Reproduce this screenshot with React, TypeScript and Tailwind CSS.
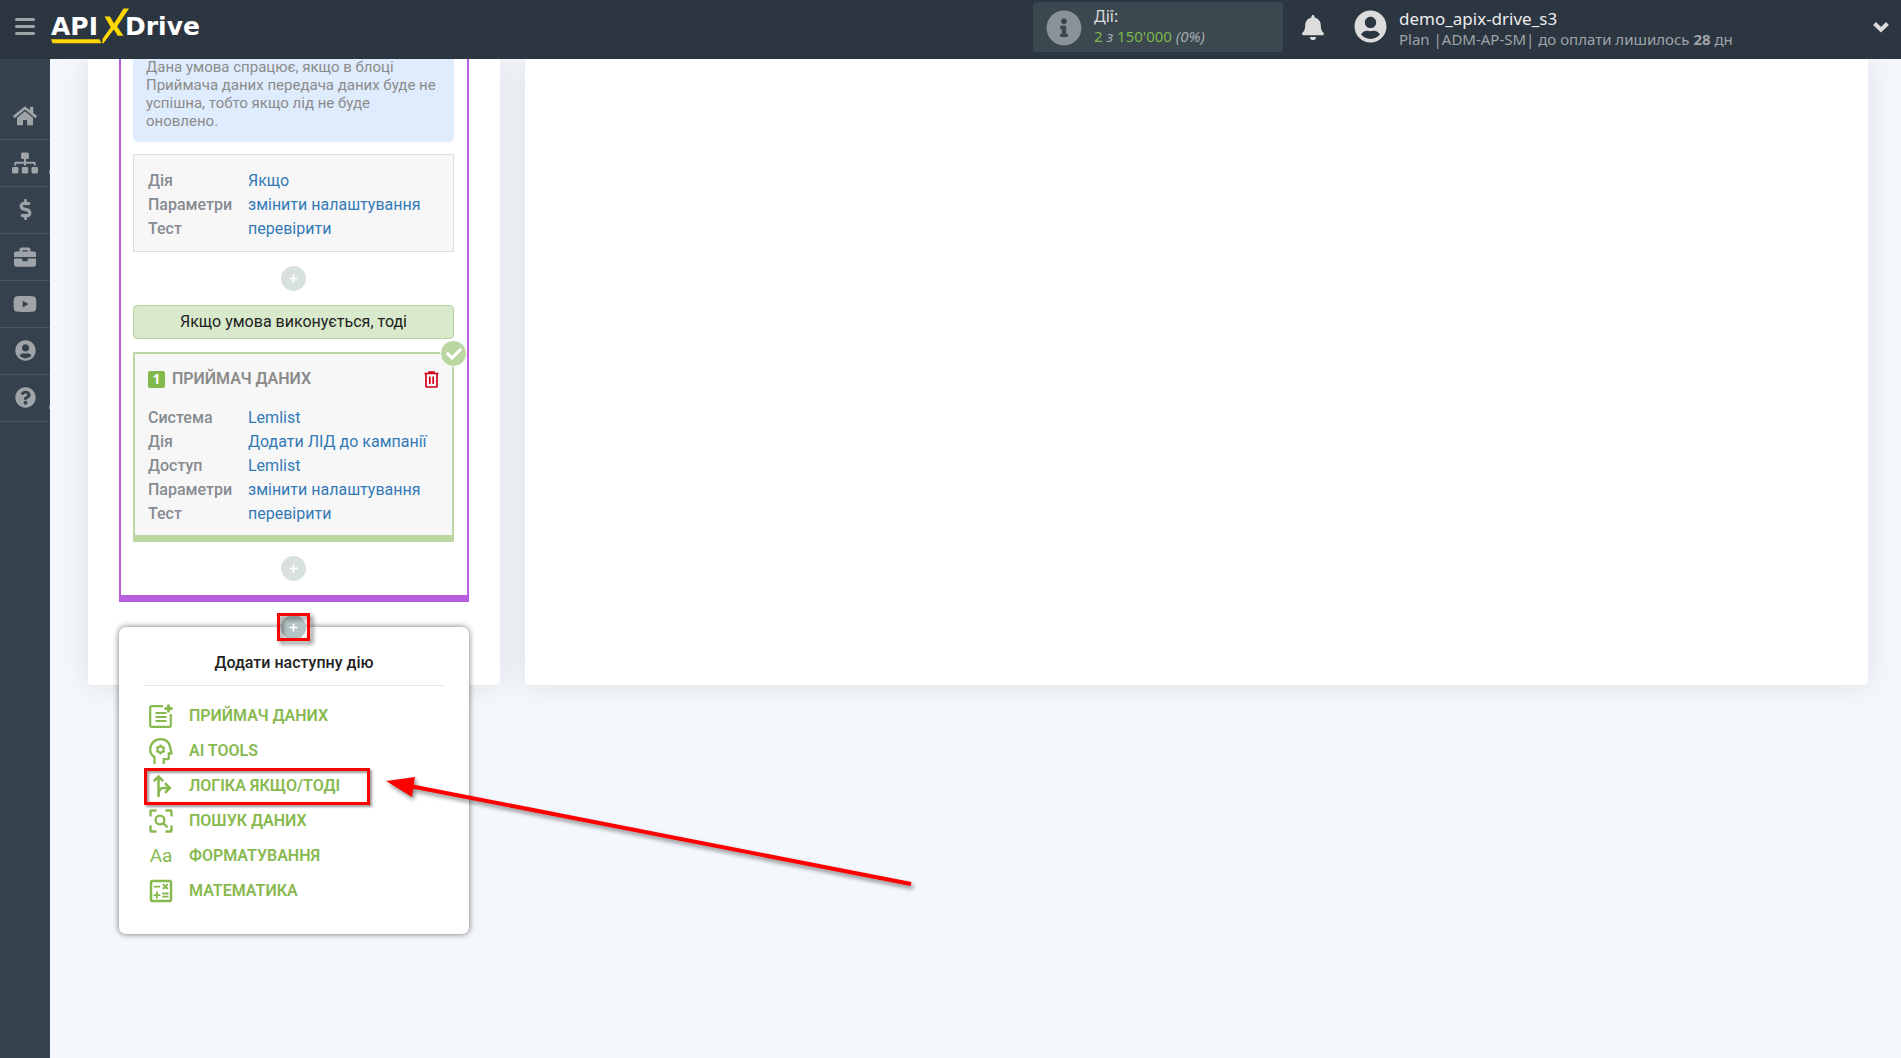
import type { ReactNode } from "react";
import {
  FaBell,
  FaBriefcase,
  FaCheck,
  FaDollarSign,
  FaHome,
  FaInfoCircle,
  FaQuestionCircle,
  FaSitemap,
  FaUserCircle,
  FaYoutube,
} from "react-icons/fa";
import { MdOutlineCalculate } from "react-icons/md";

function Logo() {
  return (
    <svg width="154" height="46" viewBox="0 0 154 46" role="img" aria-label="APIXDrive">
      <g fill="#ffffff" fontFamily="'DejaVu Sans', sans-serif" fontWeight="700" fontSize="25">
        <text x="1" y="35">
          API
        </text>
        <text x="75" y="35">
          Drive
        </text>
      </g>
      <g fill="#ffd800">
        <path d="M1 39.300h48.500l2 4H2.500z" />
        <path d="M54.500 16.500h5.500l4 7L73.500 8.500H79L67 26.500l6.500 9.200H67.800l-4-6.200L53.500 43.300h-1.200l.2-4.500 8.300-11.500z" />
      </g>
    </svg>
  );
}

function TopBar() {
  return (
    <header className="relative z-20 flex h-[59px] shrink-0 items-center bg-[#2b3641] font-['Noto_Sans',sans-serif]">
      <button type="button" aria-label="Меню" className="mb-[6px] ml-[15px] flex w-5 flex-col gap-1">
        <span className="h-[3px] rounded-xs bg-[#9fa4a8]" />
        <span className="h-[3px] rounded-xs bg-[#9fa4a8]" />
        <span className="h-[3px] rounded-xs bg-[#9fa4a8]" />
      </button>
      <a href="#" className="ml-[15px] self-start">
        <Logo />
      </a>
      <div className="mt-[2px] ml-auto flex h-[50px] w-[250px] items-start gap-3 self-start rounded bg-[#3b4850] pl-[13px]">
        <FaInfoCircle className="mt-2 size-9 text-[#8b9297]" />
        <div className="mt-1 leading-5">
          <div className="text-base leading-5 text-[#dcdcdc]">Дії:</div>
          <div className="text-[15px] leading-5 text-[#7cb84c]">
            2 <i className="text-[#a5abae]">з</i> 150'000 <i className="text-[#a5abae]">(0%)</i>
          </div>
        </div>
      </div>
      <button type="button" aria-label="Сповіщення" className="mb-1 ml-[18px] text-[#dcdcdc]">
        <FaBell className="h-[25px] w-6" />
      </button>
      <button type="button" className="mb-[6px] ml-[29px] flex w-[547px] items-center pr-3 text-left">
        <FaUserCircle className="size-[33px] text-[#dcdcdc]" />
        <span className="mt-1 ml-3 flex flex-col">
          <span className="text-[17px] leading-5 text-[#ececec]">demo_apix-drive_s3</span>
          <span className="text-[15px] leading-5 text-[#9fa4a8]">
            Plan |ADM-AP-SM| до оплати лишилось <b>28</b> дн
          </span>
        </span>
        <svg
          className="ml-auto"
          width="16"
          height="12"
          viewBox="0 0 16 12"
          fill="none"
          stroke="#dcdcdc"
          strokeWidth="4"
          aria-hidden="true"
        >
          <path d="M1.500 2.500L8 8.700l6.500-6.200" />
        </svg>
      </button>
    </header>
  );
}

const navItems = [
  { label: "Головна", icon: FaHome, size: "size-6", sub: false },
  { label: "Зв'язки", icon: FaSitemap, size: "size-[26px]", sub: true },
  { label: "Оплата", icon: FaDollarSign, size: "size-[21px]", sub: false },
  { label: "Послуги", icon: FaBriefcase, size: "size-[22px]", sub: false },
  { label: "Відео", icon: FaYoutube, size: "size-6", sub: false },
  { label: "Профіль", icon: FaUserCircle, size: "size-[21px]", sub: false },
  { label: "Допомога", icon: FaQuestionCircle, size: "size-[21px]", sub: true },
];

function Sidebar() {
  return (
    <nav className="w-[50px] shrink-0 bg-[#36414e] pt-[34px]">
      {navItems.map(({ label, icon: Icon, size, sub }) => (
        <a
          key={label}
          href="#"
          aria-label={label}
          className="relative flex h-[47px] items-center justify-center border-b border-[#4a5562] pb-px text-[#9fa4a8]"
        >
          <Icon className={size} />
          {sub && <span className="absolute right-0 bottom-3 h-1 w-px bg-[#7d858d]" />}
        </a>
      ))}
    </nav>
  );
}

function Rows({ rows }: { rows: [string, string][] }) {
  return (
    <dl className="grid grid-cols-[100px_1fr] text-base leading-6">
      {rows.map(([name, value]) => (
        <div key={name} className="contents">
          <dt className="font-medium text-[#868b92]">{name}</dt>
          <dd className="whitespace-nowrap">
            <a href="#" className="text-[#337ab7]">
              {value}
            </a>
          </dd>
        </div>
      ))}
    </dl>
  );
}

function PlusButton({ active = false }: { active?: boolean }) {
  return (
    <button
      type="button"
      aria-label="Додати дію"
      className={
        active
          ? "relative z-10 flex size-[25px] items-center justify-center rounded-full bg-[#b4c3c3] text-white"
          : "mx-auto flex size-[25px] items-center justify-center rounded-full bg-[#d9e1e0] text-white"
      }
    >
      <svg width="9" height="9" viewBox="0 0 9 9" aria-hidden="true">
        <path d="M4.500 0.500v8M0.500 4.500h8" stroke="currentColor" strokeWidth="1.700" />
      </svg>
    </button>
  );
}

function ReceiverIcon() {
  return (
    <svg width="24" height="24" viewBox="0 0 24 24" fill="none" stroke="currentColor" strokeWidth="2.200">
      <path d="M14 2.200H2.200a1 1 0 0 0-1 1v18.600a1 1 0 0 0 1 1h18.600a1 1 0 0 0 1-1V10" />
      <path d="M6.500 9h11M6.500 13h11M6.500 17h11" />
      <path d="M19.500 0.500v8M15.500 4.500h8" strokeWidth="2.800" />
    </svg>
  );
}

function HeadGearIcon() {
  return (
    <svg
      className="shrink-0"
      width="24"
      height="26"
      viewBox="0 0 24 26"
      fill="none"
      stroke="currentColor"
      strokeWidth="2.300"
    >
      <path d="M5.500 26v-6.800C2.700 17.200 1.200 14.600 1.200 11.500 1.200 5.700 5.700 1.200 11.500 1.200c5.200 0 8.600 3.200 9.500 7.500l1.500 6.600h-2.700v4.500q0 1.400-1.400 1.400h-3.700V26" />
      <circle cx="11.500" cy="11.500" r="3" strokeWidth="2" />
      <path
        d="M11.500 6.500v2M11.500 14.500v2M7.200 9l1.700 1M14.100 13l1.700 1M7.200 14l1.700-1M14.100 10l1.700-1"
        strokeWidth="2"
      />
    </svg>
  );
}

function BranchIcon() {
  return (
    <svg width="24" height="24" viewBox="0 0 24 24" fill="none" stroke="currentColor" strokeWidth="2.500">
      <path d="M9.500 23V3M4.800 7.200l4.700-4.700 4.700 4.700M9.500 21c0-5 1.500-7 5-7h6.500M16 9.200l4.800 4.800-4.800 4.800" />
    </svg>
  );
}

function SearchFrameIcon() {
  return (
    <svg width="24" height="24" viewBox="0 0 24 24" fill="none" stroke="currentColor" strokeWidth="2.400">
      <path d="M1.500 7.500V2.200Q1.500 1.500 2.200 1.500H7.500M16.500 1.500h5.300q.7 0 .7.700v5.300M22.500 16.500v5.300q0 .7-.7.700h-5.300M7.500 22.500H2.200q-.7 0-.7-.7v-5.300" />
      <circle cx="11" cy="11" r="4.400" />
      <path d="M14 14l4.500 4.500" />
    </svg>
  );
}

function TrashIcon() {
  return (
    <svg width="15" height="17" viewBox="0 0 15 17" fill="none" stroke="currentColor" strokeWidth="1.700">
      <path d="M0.500 2.500h14M5 2.500V1h5v1.500M2 3v12.200q0 .8.8.8h9.400q.8 0 .8-.8V3M5.800 5.500V13M9.200 5.500V13" />
    </svg>
  );
}

const actions: { label: string; icon: ReactNode; marked?: boolean }[] = [
  { label: "ПРИЙМАЧ ДАНИХ", icon: <ReceiverIcon /> },
  { label: "AI TOOLS", icon: <HeadGearIcon /> },
  { label: "ЛОГІКА ЯКЩО/ТОДІ", icon: <BranchIcon />, marked: true },
  { label: "ПОШУК ДАНИХ", icon: <SearchFrameIcon /> },
  { label: "ФОРМАТУВАННЯ", icon: <span className="pt-[2px] text-[19px] font-normal">Aa</span> },
  { label: "МАТЕМАТИКА", icon: <MdOutlineCalculate className="size-[30px] shrink-0" /> },
];

function Arrow() {
  return (
    <svg
      className="pointer-events-none absolute top-2 left-[238px] drop-shadow-[2px_3px_2px_rgba(0,0,0,0.45)]"
      width="540"
      height="116"
      viewBox="0 0 540 116"
      aria-hidden="true"
    >
      <path d="M28 10L529 108" stroke="#ff0000" strokeWidth="4" />
      <path d="M4 5l29-4-3 20z" fill="#ff0000" />
    </svg>
  );
}

function ActionMenu() {
  return (
    <div className="absolute top-3 -right-px left-0 rounded-[7px] bg-white px-[25px] pt-[23px] pb-[26px] shadow-[0_0_6px_rgba(0,0,0,0.55)]">
      <h3 className="border-b border-[#e9e9e9] pb-[9px] text-center text-base leading-[26px] font-medium text-[#222]">
        Додати наступну дію
      </h3>
      <ul className="mt-3">
        {actions.map(({ label, icon, marked }) => (
          <li key={label} className="relative">
            <button
              type="button"
              className="flex h-[35px] w-full items-center text-left text-base font-semibold text-[#87b94f]"
            >
              <span className="ml-[5px] flex w-6 justify-center">{icon}</span>
              <span className="ml-4">{label}</span>
            </button>
            {marked && (
              <>
                <span className="pointer-events-none absolute top-0 left-0 h-[37px] w-[226px] border-3 border-[#ff0000] drop-shadow-[2px_2px_1px_rgba(0,0,0,0.4)]" />
                <Arrow />
              </>
            )}
          </li>
        ))}
      </ul>
    </div>
  );
}

function FlowPanel() {
  return (
    <section className="w-[412px] shrink-0 rounded-b bg-white px-[31px] pb-[45px] shadow-[0_0_30px_rgba(0,0,0,0.1)]">
      <div className="border-x-2 border-b-7 border-[#b85fdf] pr-[13px] pb-[14px] pl-3">
        <p className="-mt-px rounded-b-[5px] bg-[#dfecfd] px-[13px] pb-3 text-[15px] leading-[18px] text-[#8b8b8b]">
          Дана умова спрацює, якщо в блоці Приймача даних передача даних буде не успішна, тобто якщо лід не буде
          оновлено.
        </p>
        <div className="mt-3 mb-[14px] border border-[#dddddd] bg-[#f7f7f7] px-[14px] pt-[14px] pb-[10px]">
          <Rows
            rows={[
              ["Дія", "Якщо"],
              ["Параметри", "змінити налаштування"],
              ["Тест", "перевірити"],
            ]}
          />
        </div>
        <PlusButton />
        <div className="mt-[14px] rounded border border-[#b3d3a0] bg-[#d8e9cc] py-1 text-center text-base leading-6 text-[#222]">
          Якщо умова виконується, тоді
        </div>
        <div className="relative mt-[13px] mb-[14px] border-2 border-b-7 border-[#bbd6a0] bg-[#f7f7f7] px-[13px] pt-[13px] pb-[9px]">
          <span className="absolute -top-[14px] -right-[15px] flex size-[27px] items-center justify-center rounded-full border border-white bg-[#bbd6a0] text-white">
            <FaCheck className="size-4" />
          </span>
          <div className="mb-[15px] flex h-6 items-center">
            <span className="flex size-[17px] items-center justify-center rounded-xs bg-[#82b84c] font-['Noto_Sans',sans-serif] text-sm font-bold text-white">
              1
            </span>
            <h3 className="ml-[7px] text-base font-semibold text-[#8b8b8b]">ПРИЙМАЧ ДАНИХ</h3>
            <button type="button" aria-label="Видалити" className="ml-auto text-[#d2001a]">
              <TrashIcon />
            </button>
          </div>
          <Rows
            rows={[
              ["Система", "Lemlist"],
              ["Дія", "Додати ЛІД до кампанії"],
              ["Доступ", "Lemlist"],
              ["Параметри", "змінити налаштування"],
              ["Тест", "перевірити"],
            ]}
          />
        </div>
        <PlusButton />
      </div>
      <div className="relative z-10 mt-[13px] mr-px flex justify-center">
        <ActionMenu />
        <PlusButton active />
        <span className="pointer-events-none absolute -top-[2px] z-20 h-7 w-[33px] border-3 border-[#ff0000] drop-shadow-[3px_3px_2px_rgba(0,0,0,0.5)]" />
      </div>
    </section>
  );
}

export default function App() {
  return (
    <div className="flex h-screen flex-col overflow-hidden bg-[#f4f7fc] font-[Roboto,sans-serif]">
      <TopBar />
      <div className="flex min-h-0 flex-1">
        <Sidebar />
        <main className="flex flex-1 items-start pr-[33px] pl-[38px]">
          <div className="flex flex-1 gap-[25px]">
            <FlowPanel />
            <section className="flex-1 rounded-b bg-white shadow-[0_0_30px_rgba(0,0,0,0.1)]" />
          </div>
        </main>
      </div>
    </div>
  );
}
